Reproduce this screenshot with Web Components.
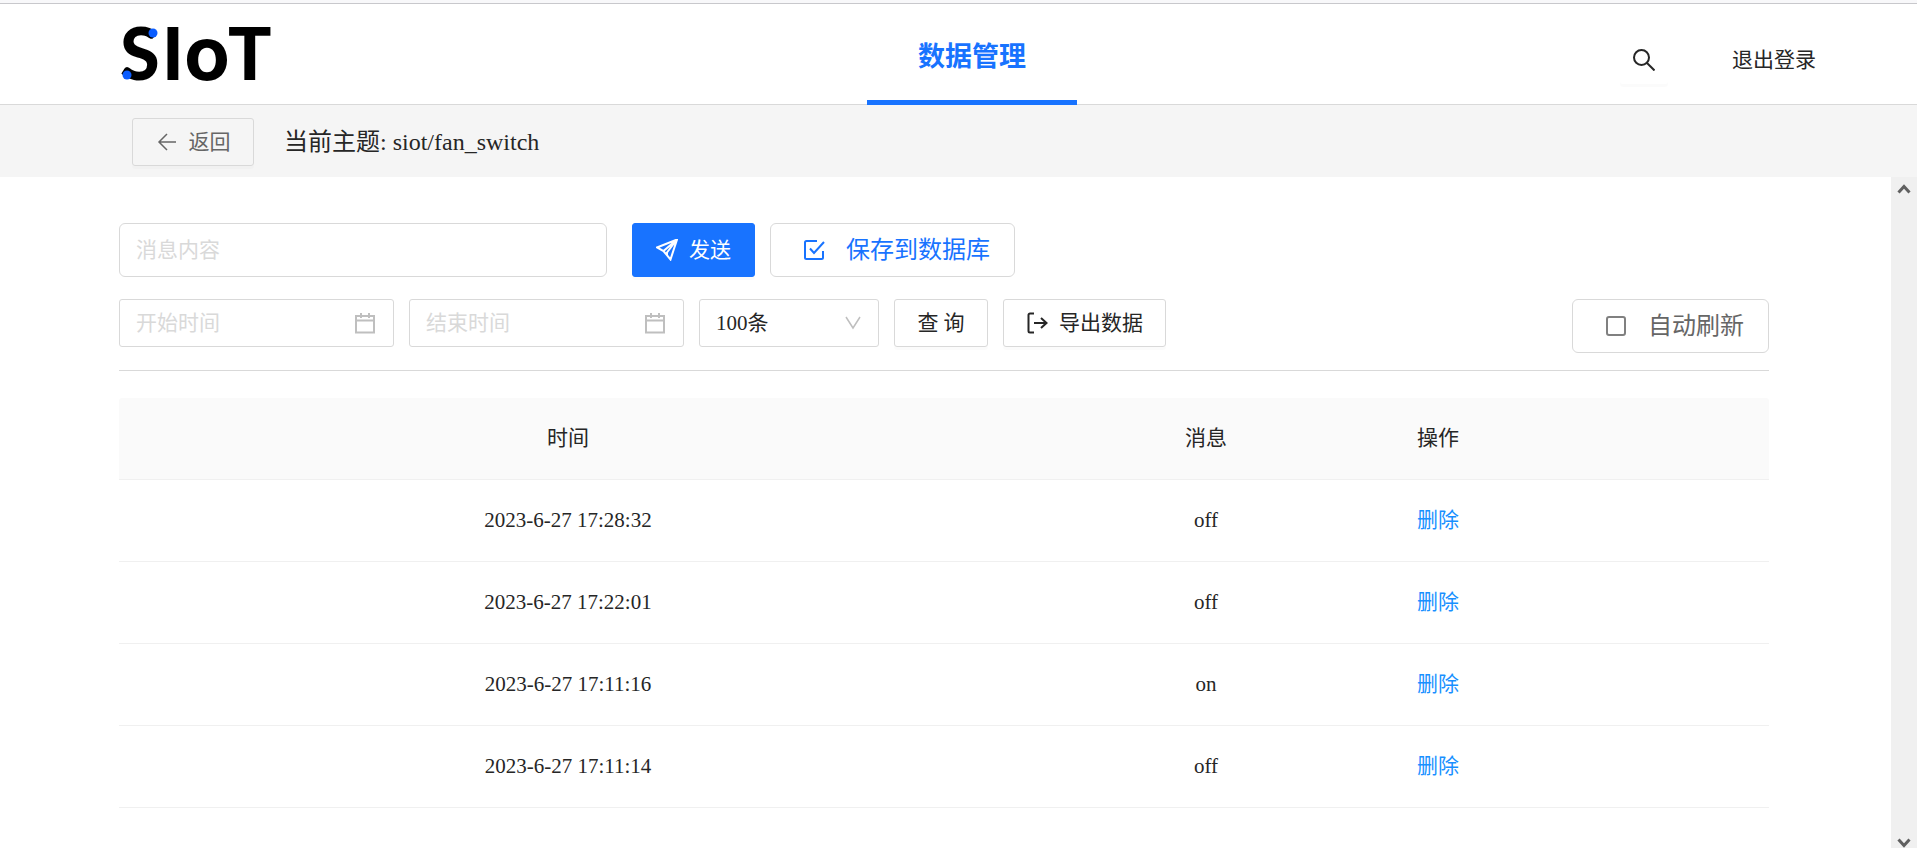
<!DOCTYPE html>
<html lang="zh-CN">
<head>
<meta charset="utf-8">
<meta name="viewport" content="width=device-width, initial-scale=1">
<title>SIoT 数据管理</title>
<style>
  :root {
    --blue: #1873ff;
    --link: #1890ff;
    --line: #d9d9d9;
    --ink: #262626;
    --ui-font: "Liberation Serif", "Noto Sans CJK SC", serif;
  }
  body {
    margin: 0;
    background: #fff;
    color: var(--ink);
    font: 21px/32px var(--ui-font);
  }
</style>
</head>
<body>
<siot-app></siot-app>

<script>
const define = (name, html, setup) => {
  const template = document.createElement('template');
  template.innerHTML = html;
  customElements.define(name, class extends HTMLElement {
    constructor() {
      super();
      const root = this.attachShadow({ mode: 'open' });
      root.append(template.content.cloneNode(true));
    }
    connectedCallback() {
      if (setup) setup(this, this.shadowRoot);
    }
  });
};

// Outline icons, stroked with the current text colour.
const ICONS = {
  back: '<path d="M20 11H3M11 3L3 11l8 8"/>',
  search: '<circle cx="8.5" cy="8.5" r="7.5"/><path d="M14 14l7.500 7.500"/>',
  send: '<path d="M21 0.500L1 8.500l6.500 3.500L14.500 20.500zM21 0.500L7.500 12M21 0.500L11 13.500v3"/>',
  check: '<path d="M13 2H2.500A1.500 1.500 0 0 0 1 3.500v15A1.500 1.500 0 0 0 2.500 20h15a1.500 1.500 0 0 0 1.500-1.500V12M6 9.500l4 4.500L20 3"/>',
  calendar: '<path d="M2 4h18v16.500H2zM2 8.500h18M7 1v5M15 1v5"/>',
  down: '<path d="M4 5l7 11 7-11"/>',
  out: '<path d="M8 1.500H4a1.500 1.500 0 0 0-1.500 1.500v16a1.500 1.500 0 0 0 1.500 1.500h4M8 11h13M15 6l5.500 5-5.500 5"/>',
};
define('siot-icon', `
  <style>
    :host { display: inline-flex; flex: none; width: 22px; height: 22px; }
    svg { width: 100%; height: 100%; fill: none; stroke: currentColor; stroke-width: var(--stroke, 2); }
  </style>
  <svg viewBox="0 0 22 22" aria-hidden="true"></svg>`,
  (el, root) => { root.querySelector('svg').innerHTML = ICONS[el.getAttribute('name')]; });

define('siot-button', `
  <style>
    :host { display: block; flex: none; }
    button {
      box-sizing: border-box; display: flex; align-items: center; justify-content: center; gap: 11px;
      width: 100%; height: 48px; margin: 0; padding: 0 22px;
      border: 1px solid var(--line); border-radius: 3px; background: transparent;
      box-shadow: 0 3px 0 rgba(0,0,0,.016);
      font: inherit; color: inherit; white-space: pre; cursor: pointer;
    }
    :host([kind="primary"]) button { height: 54px; color: #fff; background: var(--blue); border-color: var(--blue); }
    :host([kind="save"]) button {
      height: 54px; padding: 0 24px 0 33px; gap: 20px; border-radius: 6px;
      box-shadow: none; color: var(--blue); font-size: 24px;
    }
    :host([kind="plain"]) button { border-color: transparent; padding: 0 12px; }
    :host([kind="back"]) button { color: #666; }
  </style>
  <button type="button"><slot></slot></button>`,
  (el, root) => {
    if (el.hasAttribute('label')) root.querySelector('button').setAttribute('aria-label', el.getAttribute('label'));
  });

define('siot-field', `
  <style>
    :host { display: block; }
    label {
      box-sizing: border-box; display: flex; align-items: center; height: 48px; padding: 0 17px 0 16px;
      border: 1px solid var(--line); border-radius: 3px; color: #bfbfbf;
    }
    :host([size="large"]) label { height: 54px; border-radius: 6px; }
    input { flex: 1; min-width: 0; padding: 0; border: 0; outline: 0; background: none; font: inherit; color: var(--ink); }
    input::placeholder { color: #d9d9d9; opacity: 1; }
  </style>
  <label><input type="text"><slot></slot></label>`,
  (el, root) => {
    const input = root.querySelector('input');
    input.placeholder = el.getAttribute('placeholder');
    input.setAttribute('aria-label', input.placeholder);
  });

define('siot-select', `
  <style>
    :host { display: block; position: relative; }
    select {
      box-sizing: border-box; width: 100%; height: 48px; margin: 0; padding: 0 40px 0 16px;
      appearance: none; border: 1px solid var(--line); border-radius: 3px; background: #fff;
      font: inherit; color: inherit;
    }
    siot-icon { --stroke: 1.5; position: absolute; top: 13px; right: 15px; color: #bfbfbf; pointer-events: none; }
  </style>
  <select aria-label="显示条数"><option>100条</option><option>200条</option><option>500条</option></select>
  <siot-icon name="down"></siot-icon>`);

define('siot-checkbox', `
  <style>
    :host { display: block; }
    label {
      box-sizing: border-box; display: flex; align-items: center; gap: 22px; height: 54px; padding: 0 24px 0 33px;
      border: 1px solid var(--line); border-radius: 6px; color: #666; font-size: 24px; white-space: nowrap;
    }
    input { appearance: none; box-sizing: border-box; width: 20px; height: 20px; margin: 0; border: 2px solid #808080; border-radius: 3px; }
    input:checked { background: var(--blue); border-color: var(--blue); }
  </style>
  <label><input type="checkbox"><slot></slot></label>`);

define('siot-logo', `
  <style>
    :host { display: block; }
    svg { display: block; width: 180px; height: 100px; }
    text { font: 900 72px Lato, sans-serif; fill: #000; }
    .round { font: 700 75px Inter, sans-serif; }
    circle { fill: #0a5cff; }
  </style>
  <svg viewBox="-12 0 180 100" role="img" aria-label="SIoT">
    <text y="76"><tspan x="-2">S</tspan><tspan x="40">I</tspan><tspan class="round" x="62">o</tspan><tspan x="106">T</tspan></text>
    <circle cx="31" cy="29" r="4.5"/><circle cx="5" cy="71" r="4.5"/>
  </svg>`);

define('siot-header', `
  <style>
    :host {
      display: grid; grid-template-columns: 1fr 210px 1fr; align-items: start;
      height: 101px; padding: 0 95px 0 122px; box-sizing: border-box;
      border-bottom: 1px solid var(--line); background: #fff;
    }
    siot-logo { margin-left: -12px; }
    .tab {
      box-sizing: border-box; height: 101px; border-bottom: 5px solid var(--blue);
      display: flex; align-items: center; justify-content: center; padding-top: 9px;
      color: var(--blue); font-size: 27px; font-weight: 700; text-decoration: none;
    }
    .side { display: flex; align-items: center; justify-content: flex-end; gap: 64px; height: 100px; padding-top: 12px; box-sizing: border-box; }
    .side a { color: inherit; text-decoration: none; margin-right: 6px; }
  </style>
  <siot-logo></siot-logo>
  <a class="tab" href="#data">数据管理</a>
  <div class="side">
    <siot-button kind="plain" label="搜索"><siot-icon name="search"></siot-icon></siot-button>
    <a href="#logout">退出登录</a>
  </div>`);

define('siot-topic-bar', `
  <style>
    :host { display: flex; align-items: center; gap: 30px; height: 72px; padding: 2px 132px 0; box-sizing: border-box; background: #f5f5f5; }
    siot-button { width: 122px; }
    .topic { font-size: 24px; }
    siot-icon { --stroke: 1.5; }
  </style>
  <siot-button kind="back"><siot-icon name="back"></siot-icon>返回</siot-button>
  <span class="topic"><slot></slot></span>`);

define('siot-toolbar', `
  <style>
    :host { display: block; padding-bottom: 17px; border-bottom: 1px solid var(--line); }
    .row { display: flex; align-items: flex-start; gap: 15px; }
    .row + .row { margin-top: 22px; }
    .message { width: 488px; margin-right: 10px; }
    .date { width: 275px; }
    .count { width: 180px; }
    .send { width: 123px; }
    .query { width: 94px; }
    siot-checkbox { margin-left: auto; }
  </style>
  <div class="row">
    <siot-field class="message" size="large" placeholder="消息内容"></siot-field>
    <siot-button class="send" kind="primary"><siot-icon name="send"></siot-icon>发送</siot-button>
    <siot-button kind="save"><siot-icon name="check"></siot-icon>保存到数据库</siot-button>
  </div>
  <div class="row">
    <siot-field class="date" placeholder="开始时间"><siot-icon name="calendar"></siot-icon></siot-field>
    <siot-field class="date" placeholder="结束时间"><siot-icon name="calendar"></siot-icon></siot-field>
    <siot-select class="count"></siot-select>
    <siot-button class="query">查 询</siot-button>
    <siot-button><siot-icon name="out"></siot-icon>导出数据</siot-button>
    <siot-checkbox>自动刷新</siot-checkbox>
  </div>`);

const MESSAGES = [
  ['2023-6-27 17:28:32', 'off'],
  ['2023-6-27 17:22:01', 'off'],
  ['2023-6-27 17:11:16', 'on'],
  ['2023-6-27 17:11:14', 'off'],
];
define('siot-table', `
  <style>
    :host { display: block; }
    table { width: 100%; table-layout: fixed; border-collapse: separate; border-spacing: 0; }
    .text { width: 378px; }
    .action { width: 374px; }
    th, td { box-sizing: border-box; height: 82px; padding: 0 22px 2px; border-bottom: 1px solid #f0f0f0; font-weight: 400; text-align: center; }
    th { background: #fafafa; }
    th:first-child { border-top-left-radius: 3px; }
    th:last-child { border-top-right-radius: 3px; }
    th:last-child, td:last-child { text-align: left; }
    a { color: var(--link); text-decoration: none; }
  </style>
  <table>
    <colgroup><col><col class="text"><col class="action"></colgroup>
    <thead><tr><th scope="col">时间</th><th scope="col">消息</th><th scope="col">操作</th></tr></thead>
    <tbody></tbody>
  </table>`,
  (el, root) => {
    root.querySelector('tbody').innerHTML = MESSAGES.map(([time, text]) =>
      `<tr><td>${time}</td><td>${text}</td><td><a href="#delete">删除</a></td></tr>`).join('');
  });

// Scroll track with an arrow at each end.
define('siot-scrollbar', `
  <style>
    :host { display: flex; flex-direction: column; justify-content: space-between; width: 26px; background: #f0f0f0; color: #606060; }
    svg { display: block; width: 26px; height: 24px; fill: none; stroke: currentColor; stroke-width: 3; }
    svg + svg { height: 16px; }
  </style>
  <svg viewBox="0 0 26 24" aria-hidden="true"><path d="M7.500 15.500L13 9.500l5.500 6"/></svg>
  <svg viewBox="0 0 26 16" aria-hidden="true"><path d="M7.500 7.500L13 13.500l5.500-6"/></svg>`);

define('siot-app', `
  <style>
    :host { display: flex; flex-direction: column; min-height: 100vh; }
    .edge { height: 3px; background: #f8f8fa; border-bottom: 1px solid #c8c8cc; }
    .body { flex: 1; display: flex; }
    main { flex: 1; min-width: 0; padding: 46px 122px 0 119px; }
    siot-table { margin-top: 27px; }
  </style>
  <div class="edge"></div>
  <siot-header></siot-header>
  <siot-topic-bar>当前主题: siot/fan_switch</siot-topic-bar>
  <div class="body">
    <main>
      <siot-toolbar></siot-toolbar>
      <siot-table></siot-table>
    </main>
    <siot-scrollbar></siot-scrollbar>
  </div>`);
</script>
</body>
</html>
